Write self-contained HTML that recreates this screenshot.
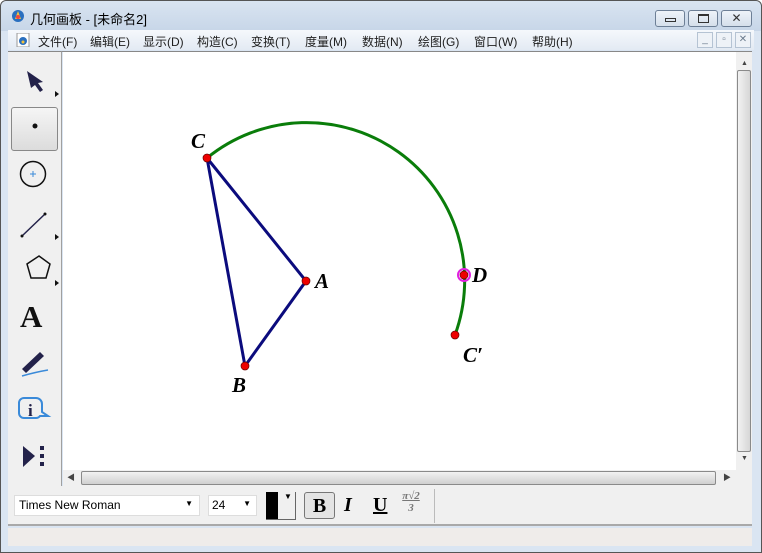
<!DOCTYPE html>
<html><head><meta charset="utf-8"><style>
*{margin:0;padding:0;box-sizing:border-box}
body{width:762px;height:553px;overflow:hidden;background:#fff;font-family:"Liberation Sans","Noto Sans CJK SC",sans-serif;position:relative}
.a{position:absolute}
.menu span{position:absolute;top:3px;font-size:12px;color:#1e1e1e}
.wb{position:absolute;top:10px;height:17px;border:1px solid #6d7f96;border-radius:3px;background:linear-gradient(#eef3f9,#d5dfeb)}
.mb{position:absolute;top:32px;width:16px;height:16px;border:1px solid #b5c3d3;background:#eef2f7;color:#6a7a8c;font-size:10px;text-align:center;line-height:14px}
</style></head><body>
<div class="a" style="left:0;top:0;width:762px;height:553px;background:#dae5f2;border:1px solid #555;border-radius:6px 6px 0 0"></div>
<div class="a" style="left:1px;top:1px;width:760px;height:30px;background:linear-gradient(#d9e4f1,#c7d6e8);border-radius:6px 6px 0 0"></div>
<svg class="a" style="left:10px;top:8px" width="16" height="16"><circle cx="8" cy="8" r="6" fill="#2a6fbf"/><path d="M8 3 L11 11 L5 11Z" fill="#f3c23c"/><circle cx="8" cy="9" r="2" fill="#e44"/></svg>
<div class="a" style="left:30px;top:9px;font-size:13px;color:#000">几何画板 - [未命名2]</div>
<div class="wb" style="left:655px;width:30px"><div class="a" style="left:9px;top:7px;width:11px;height:4px;border:1px solid #333"></div></div>
<div class="wb" style="left:688px;width:30px"><div class="a" style="left:9px;top:3px;width:11px;height:9px;border:1px solid #333;border-top-width:2px"></div></div>
<div class="wb" style="left:721px;width:31px;font-size:12px;text-align:center;line-height:15px;color:#333">✕</div>
<div class="a menu" style="left:8px;top:30px;width:746px;height:20px;background:linear-gradient(#f5f8fc,#e3eaf3)">
<svg class="a" style="left:8px;top:3px" width="14" height="14"><rect x="1" y="0" width="12" height="14" fill="#fff" stroke="#999"/><circle cx="7" cy="8" r="4" fill="#2a6fbf"/><circle cx="7" cy="9" r="1.5" fill="#f3c23c"/></svg>
<span style="left:30px">文件(F)</span><span style="left:82px">编辑(E)</span><span style="left:135px">显示(D)</span><span style="left:189px">构造(C)</span><span style="left:243px">变换(T)</span><span style="left:297px">度量(M)</span><span style="left:354px">数据(N)</span><span style="left:410px">绘图(G)</span><span style="left:466px">窗口(W)</span><span style="left:524px">帮助(H)</span>
</div>
<div class="mb" style="left:697px">_</div><div class="mb" style="left:716px">▫</div><div class="mb" style="left:735px">✕</div>
<div class="a" style="left:8px;top:51px;width:54px;height:435px;background:#f0f0f0;border-right:1px solid #a0a0a0;border-top:1px solid #888"></div>
<div class="a" style="left:62px;top:51px;width:690px;height:1px;background:#888"></div>
<div class="a" style="left:11px;top:107px;width:47px;height:44px;border:1px solid #888;border-radius:3px;background:linear-gradient(#f5f5f5,#dcdcdc)"></div>
<svg class="a" style="left:8px;top:52px" width="54" height="434">
<path d="M19 19 L35 30 L30 31 L35 38 L32 40 L27 33 L23 36Z" fill="#23224a"/>
<path d="M47 39 l4 3 l-4 3z" fill="#111"/>
<circle cx="27" cy="74" r="2.5" fill="#111"/>
<circle cx="25" cy="122" r="12.5" fill="none" stroke="#111" stroke-width="1.5"/>
<path d="M22 122h6M25 119v6" stroke="#3a8ad9" stroke-width="1"/>
<path d="M14 184 L37 162" stroke="#23224a" stroke-width="1.5"/><circle cx="14" cy="184" r="1.5" fill="#111"/><circle cx="37" cy="162" r="1.5" fill="#111"/>
<path d="M47 182 l4 3 l-4 3z" fill="#111"/>
<path d="M31 204 L42 212 L38 226 L23 226 L19 212Z" fill="none" stroke="#111" stroke-width="1.5"/>
<path d="M47 228 l4 3 l-4 3z" fill="#111"/>
<text x="12" y="275" font-family="Liberation Serif" font-weight="bold" font-size="31" fill="#111">A</text>
<path d="M14 317 L32 300 L36 304 L18 321Z" fill="#23224a"/><path d="M14 324 Q28 320 40 318" stroke="#3a8ad9" stroke-width="1.5" fill="none"/>
<path d="M16 346 h12 a6 6 0 0 1 6 6 v8 l6 4 h-8 a5 5 0 0 1 -4 2 h-12 a5 5 0 0 1 -5 -5 v-10 a5 5 0 0 1 5 -5z" fill="none" stroke="#3a8ad9" stroke-width="2"/>
<text x="20" y="364" font-family="Liberation Serif" font-weight="bold" font-size="17" fill="#23224a">i</text>
<path d="M15 394 L27 404 L15 415Z" fill="#23224a"/><rect x="32" y="394" width="4" height="4" fill="#23224a"/><rect x="32" y="402" width="4" height="4" fill="#23224a"/><rect x="32" y="410" width="4" height="4" fill="#23224a"/>
</svg>
<svg class="a" style="left:63px;top:52px" width="673" height="418">
<rect width="673" height="418" fill="#fff"/>
<g transform="translate(-63,-52)">
<path d="M207 158 A158 158 0 0 1 455 335" fill="none" stroke="#0a7d0a" stroke-width="3"/>
<path d="M207 158 L306 281 L245 366 Z" fill="none" stroke="#0b0b7d" stroke-width="3"/>
<circle cx="464" cy="275" r="6" fill="none" stroke="#e020e0" stroke-width="2"/>
<g fill="#e00" stroke="#600" stroke-width="0.7"><circle cx="207" cy="158" r="4"/><circle cx="306" cy="281" r="4"/><circle cx="245" cy="366" r="4"/><circle cx="455" cy="335" r="4"/><circle cx="464" cy="275" r="4"/></g>
<g font-family="Liberation Serif" font-style="italic" font-weight="bold" font-size="21" fill="#000">
<text x="191" y="148">C</text><text x="315" y="288">A</text><text x="232" y="392">B</text><text x="472" y="282">D</text><text x="463" y="362">C′</text></g>
</g></svg>
<div class="a" style="left:736px;top:52px;width:16px;height:418px;background:#f0f0f0"></div>
<div class="a" style="left:741px;top:60px;font-size:7px;color:#444">▲</div>
<div class="a" style="left:737px;top:70px;width:14px;height:382px;border:1px solid #8a8a8a;border-radius:2px;background:linear-gradient(90deg,#f2f2f2,#d6d6d6)"></div>
<div class="a" style="left:741px;top:455px;font-size:7px;color:#444">▼</div>
<div class="a" style="left:63px;top:470px;width:689px;height:16px;background:#f0f0f0"></div>
<div class="a" style="left:67px;top:472px;font-size:8px;color:#444">◀</div>
<div class="a" style="left:81px;top:471px;width:635px;height:14px;border:1px solid #8a8a8a;border-radius:2px;background:linear-gradient(#f2f2f2,#d0d0d0)"></div>
<div class="a" style="left:723px;top:472px;font-size:8px;color:#444">▶</div>
<div class="a" style="left:8px;top:486px;width:744px;height:40px;background:#f0f0f0;border-bottom:2px solid #a9a9a9"></div>
<div class="a" style="left:14px;top:495px;width:186px;height:21px;background:#fff;border:1px solid #ddd;font-size:12px;padding:2px 4px">Times New Roman<span class="a" style="right:6px;top:3px;font-size:8px">▼</span></div>
<div class="a" style="left:208px;top:495px;width:49px;height:21px;background:#fff;border:1px solid #ddd;font-size:12px;padding:2px 3px">24<span class="a" style="right:5px;top:3px;font-size:8px">▼</span></div>
<div class="a" style="left:266px;top:492px;width:30px;height:28px;border-right:1px solid #666;border-bottom:1px solid #666"><div class="a" style="left:0;top:0;width:12px;height:27px;background:#000"></div><span class="a" style="left:18px;top:0;font-size:8px">▼</span></div>
<div class="a" style="left:304px;top:492px;width:31px;height:27px;border:1px solid #777;border-radius:3px;background:#e4e4e4;font:bold 20px 'Liberation Serif';text-align:center;line-height:26px">B</div>
<div class="a" style="left:344px;top:494px;font:italic bold 20px 'Liberation Serif'">I</div>
<div class="a" style="left:373px;top:494px;font:bold 20px 'Liberation Serif';text-decoration:underline">U</div>
<div class="a" style="left:399px;top:490px;font:italic bold 11px 'Liberation Serif';color:#777;line-height:12px;text-align:center;width:24px"><span style="text-decoration:underline">π√2</span><br>3</div>
<div class="a" style="left:434px;top:489px;width:1px;height:34px;background:#bbb"></div>
<div class="a" style="left:8px;top:528px;width:744px;height:18px;background:#efecea"></div>
</body></html>
